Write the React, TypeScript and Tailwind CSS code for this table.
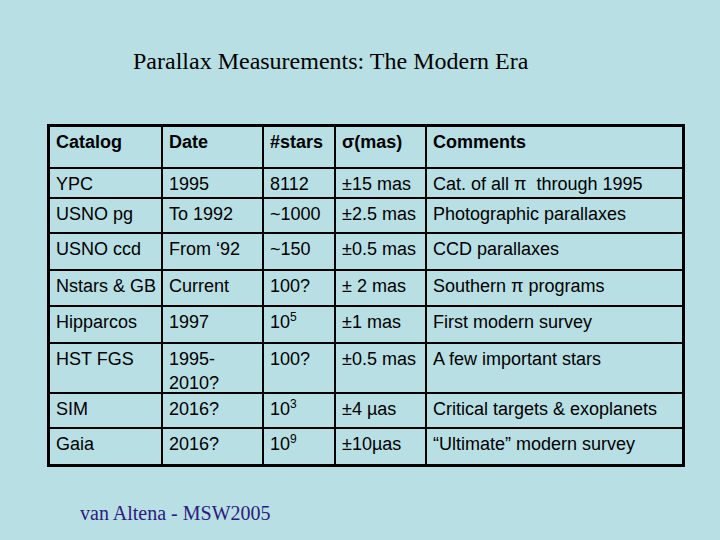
import React from "react";

type Row = { h: string; cells: React.ReactNode[]; bold?: boolean };

const widths = ["w-[113px]", "w-[101px]", "w-[72px]", "w-[91px]", "w-[255px]"];

const Sup = ({ n }: { n: string }) => (
  <sup className="text-[12px] top-[-0.55em]">{n}</sup>
);

const rows: Row[] = [
  { h: "h-[42px]", bold: true, cells: ["Catalog", "Date", "#stars", "σ(mas)", "Comments"] },
  { h: "h-[30px]", cells: ["YPC", "1995", "8112", "±15 mas", "Cat. of all π\u00a0 through 1995"] },
  { h: "h-[35px]", cells: ["USNO pg", "To 1992", "~1000", "±2.5 mas", "Photographic parallaxes"] },
  { h: "h-[37px]", cells: ["USNO ccd", "From ‘92", "~150", "±0.5 mas", "CCD parallaxes"] },
  { h: "h-[36px]", cells: ["Nstars & GB", "Current", "100?", "± 2 mas", "Southern π programs"] },
  { h: "h-[37px]", cells: ["Hipparcos", "1997", <>10<Sup n="5" /></>, "±1 mas", "First modern survey"] },
  { h: "h-[50px]", cells: ["HST FGS", <>1995-<br />2010?</>, "100?", "±0.5 mas", "A few important stars"] },
  { h: "h-[35px]", cells: ["SIM", "2016?", <>10<Sup n="3" /></>, "±4 µas", "Critical targets & exoplanets"] },
  { h: "h-[35px]", cells: ["Gaia", "2016?", <>10<Sup n="9" /></>, "±10µas", "“Ultimate” modern survey"] },
];

export default function App() {
  return (
    <div className="w-[720px] h-[540px] bg-[#b8dfe3] overflow-hidden flex flex-col">
      <h1 className="pl-[133px] pt-[47px] text-[24px] leading-[28px] text-black font-['Liberation_Serif','Times_New_Roman',serif] font-normal">
        Parallax Measurements: The Modern Era
      </h1>
      <div className="ml-[47px] mt-[49px] w-[638px] border-[3px] border-black flex flex-col font-['Liberation_Sans',Arial,sans-serif] text-[18px] leading-[24px] text-black">
        {rows.map((r, i) => (
          <div
            key={i}
            className={`flex ${r.h} ${i < rows.length - 1 ? "border-b-2 border-black" : ""} ${r.bold ? "font-bold" : ""}`}
          >
            {r.cells.map((c, j) => (
              <div
                key={j}
                className={`${widths[j]} shrink-0 pl-[6px] pt-[3px] whitespace-nowrap ${j < 4 ? "border-r-2 border-black" : ""}`}
              >
                {c}
              </div>
            ))}
          </div>
        ))}
      </div>
      <div className="pl-[80px] mt-[35px] text-[20px] leading-[23px] text-[#2b1b80] font-['Liberation_Serif','Times_New_Roman',serif]">
        van Altena - MSW2005
      </div>
    </div>
  );
}
